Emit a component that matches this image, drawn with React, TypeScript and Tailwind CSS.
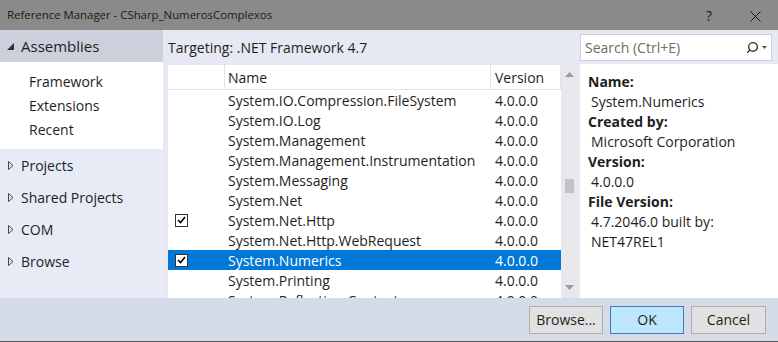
import { Search } from 'lucide-react';

const rows = [
  { name: 'System.IO.Compression.FileSystem', checked: false },
  { name: 'System.IO.Log', checked: false },
  { name: 'System.Management', checked: false },
  { name: 'System.Management.Instrumentation', checked: false },
  { name: 'System.Messaging', checked: false },
  { name: 'System.Net', checked: false },
  { name: 'System.Net.Http', checked: true },
  { name: 'System.Net.Http.WebRequest', checked: false },
  { name: 'System.Numerics', checked: true, selected: true },
  { name: 'System.Printing', checked: false },
  { name: 'System.Reflection.Context', checked: false },
];

const details = [
  ['Name:', 'System.Numerics'],
  ['Created by:', 'Microsoft Corporation'],
  ['Version:', '4.0.0.0'],
  ['File Version:', '4.7.2046.0 built by:'],
];

function Check() {
  return (
    <div className="w-[13px] h-[13px] border border-[#333] bg-white flex items-center justify-center">
      <svg width="9" height="8" viewBox="0 0 9 8"><path d="M1 4 L3.5 6.5 L8 1" fill="none" stroke="#000" strokeWidth="1.6" /></svg>
    </div>
  );
}

function Collapsed({ label }: { label: string }) {
  return (
    <div className="h-[32px] flex items-center pl-[8px] gap-[7px]">
      <svg width="6" height="9" viewBox="0 0 6 9"><path d="M0.5 0.5 L5 4.5 L0.5 8.5 Z" fill="none" stroke="#444" strokeWidth="1" /></svg>
      <span>{label}</span>
    </div>
  );
}

export default function App() {
  return (
    <div className="w-[778px] h-[342px] overflow-hidden flex flex-col text-[14px] text-[#1e1e1e] bg-[#e6e9f3]" style={{ fontFamily: '"Segoe UI", "Open Sans", "Noto Sans", sans-serif' }}>
      <div className="h-[30px] shrink-0 bg-[#8a8a8a] flex items-center pl-[7px] text-[11.4px] text-[#1a1a1a]">
        <span>Reference Manager - CSharp_NumerosComplexos</span>
        <span className="ml-auto w-[46px] text-center text-[14px]">?</span>
        <span className="w-[46px] text-center">
          <svg width="11" height="11" viewBox="0 0 11 11" className="inline"><path d="M0.5 0.5 L10.5 10.5 M10.5 0.5 L0.5 10.5" stroke="#111" strokeWidth="1" /></svg>
        </span>
      </div>
      <div className="flex flex-1 min-h-0">
        <div className="w-[163px] shrink-0 bg-[#e6ebf5] flex flex-col">
          <div className="h-[32px] bg-[#ccd0dc] flex items-center pl-[7px] gap-[7px] text-[15px]">
            <svg width="7" height="7" viewBox="0 0 7 7"><path d="M7 0 L7 7 L0 7 Z" fill="#333" /></svg>
            <span>Assemblies</span>
          </div>
          <div className="h-[87px] bg-white pl-[29px] pt-[8px] flex flex-col">
            <div className="h-[24px] leading-[24px]">Framework</div>
            <div className="h-[24px] leading-[24px]">Extensions</div>
            <div className="h-[24px] leading-[24px]">Recent</div>
          </div>
          <div>
            <Collapsed label="Projects" />
            <Collapsed label="Shared Projects" />
            <Collapsed label="COM" />
            <Collapsed label="Browse" />
          </div>
        </div>
        <div className="flex-1 flex flex-col min-w-0">
          <div className="flex flex-1 min-h-0">
            <div className="flex flex-col pl-[5px] w-[415px]">
              <div className="h-[34px] flex items-center text-[14px]">Targeting: .NET Framework 4.7</div>
              <div className="flex h-[234px] bg-white">
                <div className="w-[393px] flex flex-col overflow-hidden">
                  <div className="h-[26px] shrink-0 flex border-b border-[#e3e3e3] border-t border-t-[#e8e8e8]">
                    <div className="w-[57px] border-r border-[#e3e3e3]" />
                    <div className="w-[266px] border-r border-[#e3e3e3] pl-[3px] flex items-center">Name</div>
                    <div className="flex-1 pl-[4px] flex items-center border-r border-[#e3e3e3]">Version</div>
                  </div>
                  {rows.map(r => (
                    <div key={r.name} className={`h-[20px] shrink-0 flex items-center ${r.selected ? 'bg-[#0078d7] text-white' : ''}`}>
                      <div className="w-[57px] pl-[7px] flex items-center">{r.checked && <Check />}</div>
                      <div className="w-[266px] pl-[3px] whitespace-nowrap">{r.name}</div>
                      <div className="flex-1 pl-[4px]">4.0.0.0</div>
                    </div>
                  ))}
                </div>
                <div className="w-[17px] bg-[#e8e8ec] flex flex-col items-center">
                  <svg width="9" height="5" viewBox="0 0 9 5" className="mt-[8px]"><path d="M0 5 L4.5 0 L9 5 Z" fill="#9a9aa0" /></svg>
                  <div className="w-[9px] h-[14px] bg-[#c2c3c9] mt-[102px]" />
                  <svg width="9" height="5" viewBox="0 0 9 5" className="mt-auto mb-[8px]"><path d="M0 0 L4.5 5 L9 0 Z" fill="#9a9aa0" /></svg>
                </div>
              </div>
            </div>
            <div className="flex-1 flex flex-col pl-[2px] pr-[6px]">
              <div className="h-[34px] flex items-center">
                <div className="h-[27px] w-full bg-white border border-[#cdd1dc] flex items-center pl-[4px] pr-[4px] text-[#6d6d6d]">
                  <span>Search (Ctrl+E)</span>
                  <Search size={13} className="ml-auto text-[#333] -scale-x-100" strokeWidth={2.5} />
                  <svg width="5" height="3" viewBox="0 0 5 3" className="ml-[3px]"><path d="M0 0 L5 0 L2.5 3 Z" fill="#555" /></svg>
                </div>
              </div>
              <div className="h-[234px] bg-white -mr-[6px] pl-[8px] pt-[8px] leading-[20px]">
                {details.map(([k, v]) => (
                  <div key={k}>
                    <div className="font-bold">{k}</div>
                    <div className="pl-[3px]">{v}</div>
                  </div>
                ))}
                <div className="pl-[3px]">NET47REL1</div>
              </div>
            </div>
          </div>
        </div>
      </div>
      <div className="h-[44px] shrink-0 bg-[#d6dbe9] flex items-center justify-end gap-[7px] pr-[12px] border-b border-[#5a5a5a]">
        <button className="w-[74px] h-[28px] bg-[#e1e1e1] border border-[#adadad]">Browse...</button>
        <button className="w-[74px] h-[28px] bg-[#bee6fd] border border-[#3c7fb1]">OK</button>
        <button className="w-[75px] h-[28px] bg-[#e1e1e1] border border-[#adadad]">Cancel</button>
      </div>
    </div>
  );
}
